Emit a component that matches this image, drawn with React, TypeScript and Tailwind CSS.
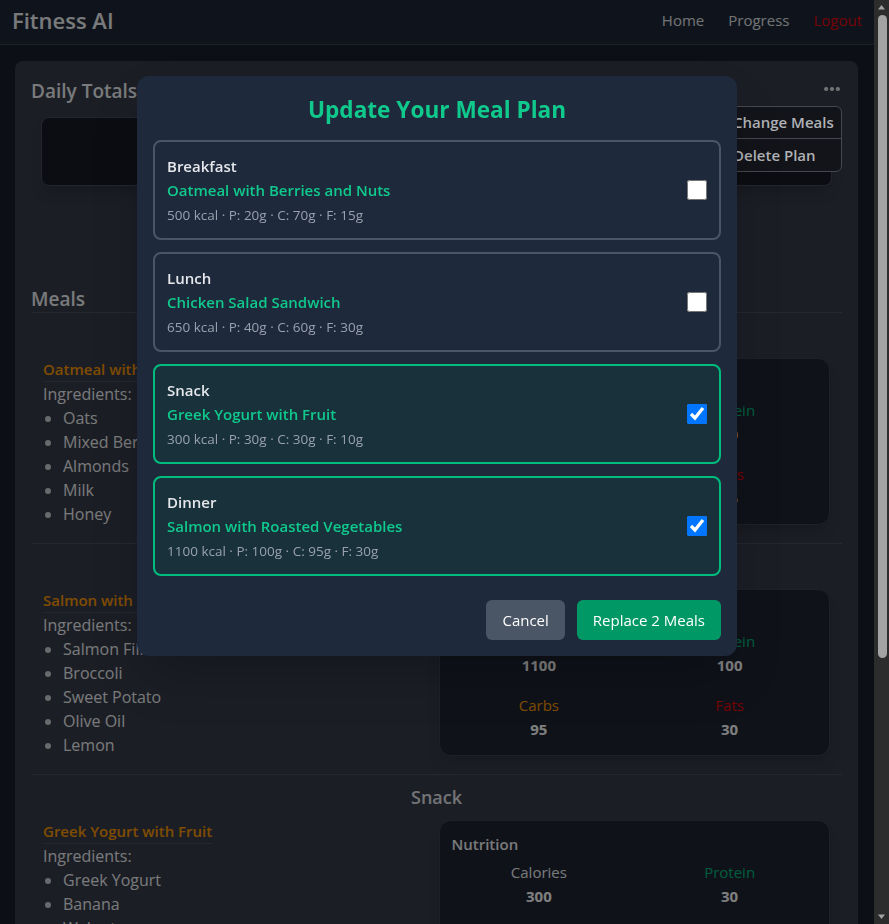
import { MoreHorizontal } from 'lucide-react'

const meals = [
  {
    type: 'Breakfast',
    name: 'Oatmeal with Berries and Nuts',
    kcal: 500,
    p: 20,
    c: 70,
    f: 15,
    checked: false,
    ingredients: ['Oats', 'Mixed Berries', 'Almonds', 'Milk', 'Honey'],
  },
  {
    type: 'Lunch',
    name: 'Chicken Salad Sandwich',
    kcal: 650,
    p: 40,
    c: 60,
    f: 30,
    checked: false,
    ingredients: ['Chicken Breast', 'Whole Wheat Bread', 'Lettuce', 'Tomato', 'Mayonnaise'],
  },
  {
    type: 'Snack',
    name: 'Greek Yogurt with Fruit',
    kcal: 300,
    p: 30,
    c: 30,
    f: 10,
    checked: true,
    ingredients: ['Greek Yogurt', 'Banana', 'Walnuts', 'Honey'],
  },
  {
    type: 'Dinner',
    name: 'Salmon with Roasted Vegetables',
    kcal: 1100,
    p: 100,
    c: 95,
    f: 30,
    checked: true,
    ingredients: ['Salmon Fillet', 'Broccoli', 'Sweet Potato', 'Olive Oil', 'Lemon'],
  },
]

// order shown on the page behind the modal
const pageMeals = [meals[0], meals[3], meals[2]]

function MealSection({ meal }: { meal: (typeof meals)[number] }) {
  return (
    <div className="px-3 pt-[9px] pb-[17px] border-b border-[#4b5060]">
      <h3 className="text-center text-[18px] leading-[26px] font-semibold text-gray-200 mb-[10px]">{meal.type}</h3>
      <div className="grid grid-cols-2 gap-1 items-start">
        <div>
          <div className="w-fit text-[15px] leading-[23px] font-semibold text-amber-500 border-b border-[#4b5060]">
            {meal.name}
          </div>
          <div className="text-[16px] leading-[24px] text-gray-100">Ingredients:</div>
          <ul className="list-disc pl-5 text-[16px] leading-[24px] text-gray-100 marker:text-gray-300">
            {meal.ingredients.map((i) => (
              <li key={i}>{i}</li>
            ))}
          </ul>
        </div>
        <div className="h-[167px] rounded-xl bg-[#1f2532] border border-[#3d4250] px-3 pt-[11px] shadow-lg">
          <div className="text-[15px] leading-[24px] font-semibold text-gray-100">Nutrition</div>
          <div className="grid grid-cols-2 gap-x-4 gap-y-4 mt-1 text-center text-[15px] leading-[24px]">
            <div>
              <div className="text-gray-100">Calories</div>
              <div className="font-bold text-white">{meal.kcal}</div>
            </div>
            <div>
              <div className="text-emerald-500">Protein</div>
              <div className="font-bold text-white">{meal.p}</div>
            </div>
            <div>
              <div className="text-amber-500">Carbs</div>
              <div className="font-bold text-white">{meal.c}</div>
            </div>
            <div>
              <div className="text-red-600">Fats</div>
              <div className="font-bold text-white">{meal.f}</div>
            </div>
          </div>
        </div>
      </div>
    </div>
  )
}

function Scrollbar() {
  return (
    <div className="fixed top-0 right-0 bottom-0 z-[60] w-[15px] bg-[#2c2c2c] flex flex-col items-center">
      <svg width="15" height="15" viewBox="0 0 15 15" className="shrink-0">
        <path d="M4 9.5 L7.5 5 L11 9.5 Z" fill="#a3a3a3" />
      </svg>
      <div className="w-[9px] h-[643px] rounded-full bg-[#a3a3a3] ml-[1px]" />
      <div className="flex-1" />
      <svg width="15" height="15" viewBox="0 0 15 15" className="shrink-0">
        <path d="M4 5.5 L7.5 10 L11 5.5 Z" fill="#a3a3a3" />
      </svg>
    </div>
  )
}

export default function App() {
  const selected = meals.filter((m) => m.checked).length

  return (
    <div className="min-h-screen bg-[#181e2c] pr-[15px] font-['Open_Sans',sans-serif]">
      {/* Navbar */}
      <nav className="h-[45px] flex items-center justify-between px-3 pb-[3px] bg-gray-800 border-b border-gray-700">
        <span className="text-[22px] font-semibold text-gray-100">Fitness AI</span>
        <div className="flex items-center gap-6 text-[15px]">
          <a className="text-gray-200">Home</a>
          <a className="text-gray-200">Progress</a>
          <a className="text-red-600">Logout</a>
        </div>
      </nav>

      {/* Main plan card */}
      <div className="relative ml-[15px] mr-4 mt-4 rounded-lg bg-[#373c4b] p-4 pb-10">
        <div className="flex items-start justify-between">
          <h2 className="text-[19px] leading-[29px] font-semibold text-gray-100">Daily Totals</h2>
          <MoreHorizontal className="w-5 h-5 text-gray-100 mt-[2px]" strokeWidth={3} />
        </div>
        <div className="mx-[10px] mt-[11px] h-[69px] rounded-lg bg-[#161a24] border border-[#484d5a] shadow-lg" />

        {/* dropdown menu */}
        <div className="absolute z-[45] top-[45px] right-4 w-[112px] rounded-md border border-[#45484f] bg-[#121419] text-[15px] font-semibold text-[#b0b2b6]">
          <div className="h-[32px] flex items-center px-[2px] border-b border-[#45484f]">Change Meals</div>
          <div className="h-[32px] flex items-center px-[2px]">Delete Plan</div>
        </div>

        <h2 className="mt-[100px] text-[19px] leading-[26px] font-semibold text-gray-100 border-b border-[#4b5060]">
          Meals
        </h2>
        {pageMeals.map((m) => (
          <MealSection key={m.type} meal={m} />
        ))}
      </div>

      {/* Overlay */}
      <div className="fixed inset-0 z-40 bg-black/50" />

      {/* Modal */}
      <div className="fixed inset-0 z-50 flex justify-center pt-[76px] pr-[15px]">
        <div className="w-[600px] h-fit rounded-xl bg-[#1e293b] px-4 pt-[18px] pb-4 shadow-2xl">
          <h2 className="text-center text-[22.6px] leading-[32px] font-bold text-[#10c98c] mb-[14px]">Update Your Meal Plan</h2>
          <div className="flex flex-col gap-3">
            {meals.map((m) => (
              <label
                key={m.type}
                className={`flex items-center justify-between rounded-lg border-2 px-3 py-[13px] ${
                  m.checked ? 'border-emerald-500 bg-emerald-900/20' : 'border-gray-600'
                }`}
              >
                <div>
                  <div className="text-[15px] leading-[22px] font-semibold text-gray-200">{m.type}</div>
                  <div className="mt-[2px] text-[15px] leading-[22px] font-semibold text-[#10c98c]">{m.name}</div>
                  <div className="mt-1 text-[13.5px] leading-[20px] text-gray-400">
                    {m.kcal} kcal · P: {m.p}g · C: {m.c}g · F: {m.f}g
                  </div>
                </div>
                <input type="checkbox" defaultChecked={m.checked} className="w-5 h-5" />
              </label>
            ))}
          </div>
          <div className="flex justify-end gap-3 mt-6">
            <button className="h-10 px-4 rounded-md bg-gray-600 text-[15px] text-white">Cancel</button>
            <button className="h-10 px-4 rounded-md bg-emerald-600 text-[15px] text-white">
              Replace {selected} Meals
            </button>
          </div>
        </div>
      </div>

      <Scrollbar />
    </div>
  )
}
